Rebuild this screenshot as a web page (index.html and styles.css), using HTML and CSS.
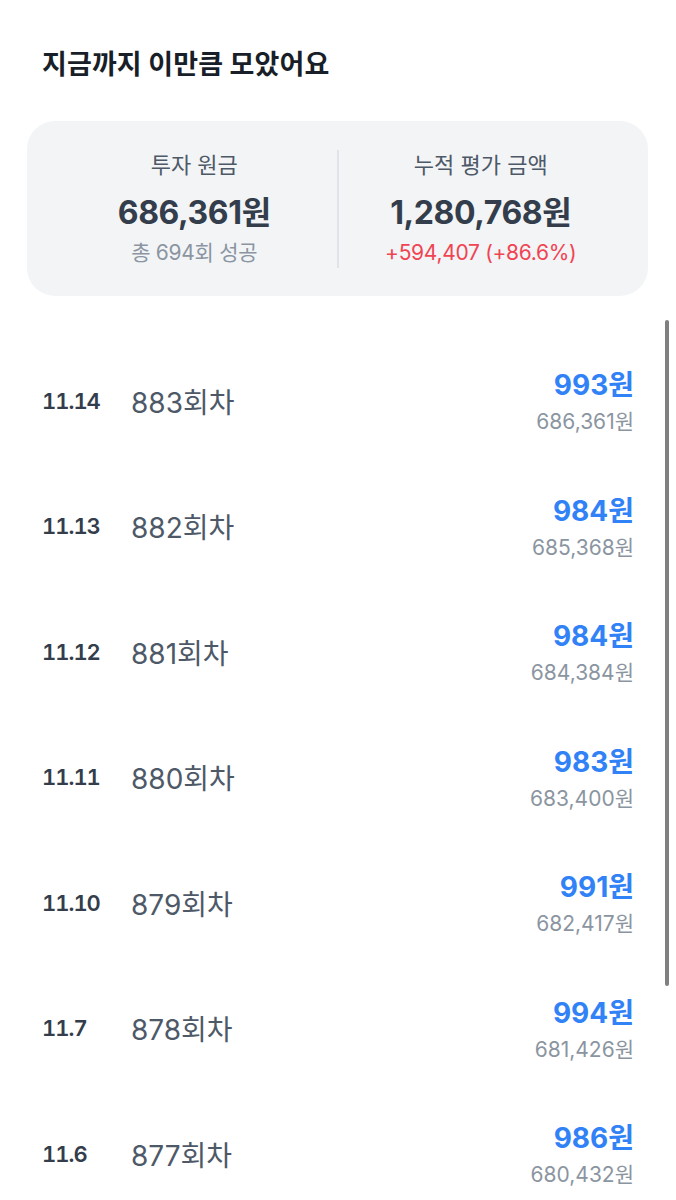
FILE: index.html
```html
<!DOCTYPE html>
<html lang="ko">
<head>
<meta charset="utf-8">
<link rel="stylesheet" href="styles.css">
</head>
<body>
<div class="page">
  <h1 class="title">지금까지 이만큼 모았어요</h1>
  <div class="summary">
    <div class="col">
      <div class="label">투자 원금</div>
      <div class="amount">686,361원</div>
      <div class="sub">총 694회 성공</div>
    </div>
    <div class="divider"></div>
    <div class="col">
      <div class="label">누적 평가 금액</div>
      <div class="amount">1,280,768원</div>
      <div class="sub red">+594,407 (+86.6%)</div>
    </div>
  </div>
  <div class="list-wrap">
    <ul class="list">
      <li class="row"><span class="date">11.14</span><span class="round">883회차</span><span class="vals"><span class="val">993원</span><span class="total">686,361원</span></span></li>
      <li class="row"><span class="date">11.13</span><span class="round">882회차</span><span class="vals"><span class="val">984원</span><span class="total">685,368원</span></span></li>
      <li class="row"><span class="date">11.12</span><span class="round">881회차</span><span class="vals"><span class="val">984원</span><span class="total">684,384원</span></span></li>
      <li class="row"><span class="date">11.11</span><span class="round">880회차</span><span class="vals"><span class="val">983원</span><span class="total">683,400원</span></span></li>
      <li class="row"><span class="date">11.10</span><span class="round">879회차</span><span class="vals"><span class="val">991원</span><span class="total">682,417원</span></span></li>
      <li class="row"><span class="date">11.7</span><span class="round">878회차</span><span class="vals"><span class="val">994원</span><span class="total">681,426원</span></span></li>
      <li class="row"><span class="date">11.6</span><span class="round">877회차</span><span class="vals"><span class="val">986원</span><span class="total">680,432원</span></span></li>
    </ul>
    <div class="scrollbar"></div>
  </div>
</div>
</body>
</html>
```
FILE: styles.css
```css
* { box-sizing: border-box; }
html, body { margin: 0; padding: 0; background: #fff; }
body {
  font-family: Inter, "Noto Sans CJK KR", "Noto Sans", sans-serif;
  width: 676px;
  height: 1200px;
  overflow: hidden;
}
.page { padding: 0 28px 0 27px; }
.title {
  margin: 0;
  padding: 46px 0 0 15px;
  font-size: 27px;
  font-weight: 700;
  color: #191f28;
  letter-spacing: 0.1px;
  line-height: 38px;
}
.summary {
  margin-top: 37px;
  height: 175px;
  padding: 0 25px;
  background: #f2f4f6;
  border-radius: 28px;
  display: flex;
  align-items: center;
}
.col {
  flex: 1;
  display: flex;
  flex-direction: column;
  align-items: center;
}
.divider {
  width: 2px;
  height: 118px;
  background: #e0e3e7;
}
.label {
  font-size: 22px;
  color: #4e5968;
  line-height: 30px;
}
.amount {
  margin-top: 13px;
  font-size: 32px;
  font-weight: 700;
  color: #333d4b;
  line-height: 40px;
  letter-spacing: -0.4px;
}
.sub {
  margin-top: 5px;
  font-size: 21px;
  color: #8b95a1;
  line-height: 30px;
  letter-spacing: -0.3px;
}
.sub.red { color: #f04452; }
.list-wrap { position: relative; margin-top: 42px; }
.list { list-style: none; margin: 0; padding: 0; }
.row {
  height: 125.5px;
  display: flex;
  align-items: center;
  padding: 0 14px 0 15px;
}
.date {
  width: 89px;
  font-size: 22px;
  font-weight: 600;
  color: #333d4b;
  font-variant-numeric: tabular-nums;
  letter-spacing: -1px;
}
.round {
  flex: 1;
  font-size: 28px;
  color: #4e5968;
  letter-spacing: 0;
}
.vals {
  display: flex;
  flex-direction: column;
  align-items: flex-end;
  margin-top: 5px;
}
.val {
  font-size: 28px;
  font-weight: 700;
  color: #3182f6;
  line-height: 38px;
  letter-spacing: 0;
}
.total {
  font-size: 21px;
  color: #8b95a1;
  line-height: 36px;
  letter-spacing: 0;
}
.scrollbar {
  position: absolute;
  right: -21px;
  top: -18px;
  width: 4px;
  height: 666px;
  border-radius: 2px;
  background: #808080;
}
```
